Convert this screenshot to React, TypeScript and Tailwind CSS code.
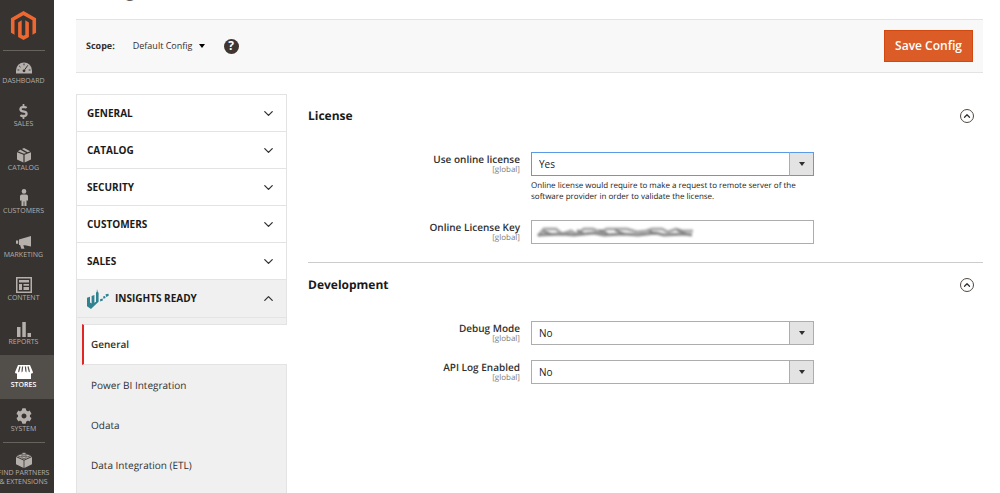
import React, { useState } from "react";
import { FaMagento, FaDollarSign, FaCog } from "react-icons/fa";
import { ChevronDown, ChevronUp } from "lucide-react";

const DashboardIcon = () => (
  <svg width="16" height="12" viewBox="0 0 16 12" fill="currentColor">
    <path d="M0 11.5V8.5a8 8 0 0 1 16 0v3z" />
    <g stroke="#373330" strokeWidth="1" fill="none">
      <path d="M1.5 8h1.8M3.2 4l1.3 1.1M8 1.6v1.7M14.5 8h-1.8M11.8 3.3l-3.2 4.5" />
      <circle cx="8" cy="8.8" r="1.4" fill="#373330" stroke="none" />
    </g>
  </svg>
);

const CatalogIcon = () => (
  <svg width="14" height="15" viewBox="0 0 14 15" fill="currentColor">
    <path d="M0 4.2l6.4 2.6v7.8L0 11.6zM14 4.2L7.6 6.8v7.8l6.4-3z" />
    <path d="M3.4 1.7L.8 3.2 7 5.8l2.2-.9zM5 .9L7 0l6.2 3.2-2.6 1.1z" />
  </svg>
);

const CustomersIcon = () => (
  <svg width="10" height="18" viewBox="0 0 10 18" fill="currentColor">
    <circle cx="5" cy="2.4" r="2.3" />
    <path d="M3 5.4h4c1.4 0 2 .8 2 2V11c0 .9-1.3.9-1.5.2V17H5.4v-4.6h-.8V17H2.5v-5.8C2.3 11.9 1 11.9 1 11V7.4c0-1.2.6-2 2-2z" />
  </svg>
);

const MarketingIcon = () => (
  <svg width="16" height="13" viewBox="0 0 16 13" fill="currentColor">
    <path d="M3 3.6L15 0v10.6L9 9.3H7.3l1.2 3.5H5.3L4.1 9H3zM0 4.6h2.2v3.2H0z" />
  </svg>
);

const ContentIcon = () => (
  <svg width="16" height="16" viewBox="0 0 16 16" fill="currentColor">
    <path fillRule="evenodd" d="M0 0h16v16H0zM1.5 1.5v13h13v-13z" />
    <path d="M3 3h10v2.5H3zM3 7h3v6H3zM7.5 7H13v1.8H7.5zM7.5 10H13v3H7.5z" />
  </svg>
);

const ReportsIcon = () => (
  <svg width="14" height="15" viewBox="0 0 14 15" fill="currentColor">
    <path d="M0 5h3.5v10H0zM5.3 0h3.5v15H5.3zM10.5 11H14v4h-3.5z" />
  </svg>
);

const StoresIcon = () => (
  <svg width="18" height="15" viewBox="0 0 18 15" fill="currentColor">
    <path d="M3 0h12l3 7.2c0 1.8-3 1.8-3.2.3-.4 1.6-3.2 1.6-3.6 0-.4 1.6-4 1.6-4.4 0-.4 1.6-3.2 1.6-3.6 0C3 9 0 9 0 7.2z" />
    <path d="M2 8h14v6H2z" />
    <path d="M5 1.5L3.6 6.8M7.6 1.5L7 6.8M10.4 1.5l.6 5.3M13 1.5l1.4 5.3" stroke="#524e4a" strokeWidth="1.2" />
  </svg>
);

const PartnersIcon = () => (
  <svg width="16" height="16" viewBox="0 0 16 16" fill="currentColor">
    <path d="M0 5l7.6 3.6V16L0 12.2zM16 5L8.4 8.6V16l7.6-3.8z" />
    <path d="M8 .8l7.6 3.4L8 7.8.4 4.2z" />
    <g stroke="#373330" strokeWidth=".6">
      <ellipse cx="8" cy="1.7" rx="2" ry="1.2" />
      <ellipse cx="4.2" cy="3.6" rx="2" ry="1.2" />
      <ellipse cx="11.8" cy="3.6" rx="2" ry="1.2" />
      <ellipse cx="8" cy="5.5" rx="2" ry="1.2" />
    </g>
  </svg>
);

const InsightsLogo = () => (
  <svg width="22" height="20" viewBox="0 0 22 20" aria-hidden="true" className="shrink-0" fill="#2f8391">
    <path d="M0 8.8l3-1v5.7l1.6.9V7l2.8-.9v7.6l1.6-.9V3.6l.7-.6L10 0l.8 3 .8.8v9L5.5 18.6 4 20l-4-2.8z" />
    <path d="M13 10.2l2.6-.7.3 2.1-2.6.9zM16 7.6l2-.7.6 2-2.1.9zM18.5 5.3l3-.6.2 2-2.5 1.2z" />
  </svg>
);

const menuItems = [
  { label: "Dashboard", icon: <DashboardIcon /> },
  { label: "Sales", icon: <FaDollarSign size={15} /> },
  { label: "Catalog", icon: <CatalogIcon /> },
  { label: "Customers", icon: <CustomersIcon /> },
  { label: "Marketing", icon: <MarketingIcon /> },
  { label: "Content", icon: <ContentIcon /> },
  { label: "Reports", icon: <ReportsIcon /> },
  { label: "Stores", icon: <StoresIcon />, active: true },
  { label: "System", icon: <FaCog size={16} /> },
];

const sections = ["General", "Catalog", "Security", "Customers", "Sales"];
const subPages = ["General", "Power BI Integration", "Odata", "Data Integration (ETL)"];

function Sidebar() {
  return (
    <aside className="flex w-[54px] shrink-0 flex-col overflow-hidden bg-[#373330] text-[#b5b0ac]">
      <a href="#" aria-label="Magento" className="flex h-[50px] items-center justify-center pr-[7px] text-[#ee6730]">
        <FaMagento size={29} />
      </a>
      <hr className="mr-[9px] ml-[3px] border-[#68625d]" />
      <ul>
        {menuItems.map((item) => (
          <li
            key={item.label}
            className={`h-[43px] even:h-[44px] ${item.active ? "bg-[#524e4a] font-semibold text-white" : ""}`}
          >
            <a href="#" className="flex flex-col items-center pt-2 pr-[7px] text-[7px] leading-[10px] uppercase">
              <span className="flex h-[18px] items-center">{item.icon}</span>
              <span>{item.label}</span>
            </a>
          </li>
        ))}
      </ul>
      <hr className="mr-[9px] ml-[3px] border-[#68625d]" />
      <a href="#" className="flex flex-col items-center pt-2 pr-[7px] text-[7px] leading-[9px] whitespace-nowrap uppercase">
        <span className="flex h-[18px] items-center">
          <PartnersIcon />
        </span>
        <span>Find Partners</span>
        <span>&amp; Extensions</span>
      </a>
    </aside>
  );
}

function ConfigNav() {
  return (
    <nav className="w-[211px] shrink-0 border-x border-t border-[#e3e3e3] text-[10px] text-[#303030]">
      {sections.map((name) => (
        <button
          key={name}
          className="flex h-[37px] w-full items-center justify-between border-b border-[#e3e3e3] px-[10px] font-bold text-[#1a1a1a] uppercase"
        >
          {name}
          <ChevronDown size={15} strokeWidth={2} className="text-[#303030]" />
        </button>
      ))}
      <button className="flex h-[38px] w-full items-center border-b border-[#e3e3e3] bg-[#f0f0f0] px-[10px] font-bold text-[#1a1a1a] uppercase">
        <InsightsLogo />
        <span className="ml-[6px] flex-1 text-left">Insights Ready</span>
        <ChevronUp size={15} strokeWidth={2} className="text-[#303030]" />
      </button>
      <ul className="min-h-[176px] bg-[#f0f0f0] pt-[6px]">
        {subPages.map((page, i) => (
          <li key={page}>
            {i === 0 ? (
              <a
                href="#"
                aria-current="page"
                className="-mr-px ml-[5px] flex h-[41px] items-center border-y border-l-2 border-y-[#e3e3e3] border-l-[#e22626] bg-white pl-[7px] font-semibold"
              >
                {page}
              </a>
            ) : (
              <a href="#" className="flex h-[40px] items-center pl-[14px]">
                {page}
              </a>
            )}
          </li>
        ))}
      </ul>
    </nav>
  );
}

function Field({ id, label, children }: { id: string; label: string; children: React.ReactNode }) {
  return (
    <div className="grid grid-cols-[212fr_283fr_158fr] gap-x-[11px]">
      <label htmlFor={id} className="flex flex-col pt-px text-right text-[10px] leading-[12px] font-semibold text-[#303030]">
        {label}
        <span className="text-[8px] leading-[9px] font-normal text-[#808080]">[global]</span>
      </label>
      <div className="min-w-0">{children}</div>
    </div>
  );
}

function YesNoSelect({ id, initial, active = false }: { id: string; initial: string; active?: boolean }) {
  const [value, setValue] = useState(initial);
  const border = active ? "border-[#5a9be6]" : "border-[#adadad]";

  return (
    <div className="relative">
      <select
        id={id}
        value={value}
        onChange={(e) => setValue(e.target.value)}
        className={`block h-[24px] w-full appearance-none border bg-white pr-[30px] pl-[7px] text-[10px] text-[#1a1a1a] outline-none ${border}`}
      >
        <option>Yes</option>
        <option>No</option>
      </select>
      <span className={`pointer-events-none absolute inset-y-0 right-0 flex w-[25px] items-center justify-center border bg-[#e3e3e3] ${border} border-l-[#adadad]`}>
        <svg width="6" height="4" viewBox="0 0 6 4">
          <path d="M0 0h6L3 4z" fill="#303030" />
        </svg>
      </span>
    </div>
  );
}

function SectionHeader({ title }: { title: string }) {
  return (
    <div className="flex items-center justify-between pr-[9px]">
      <h2 className="text-[12px] leading-[18px] font-bold text-[#1a1a1a]">{title}</h2>
      <button aria-label={`Collapse ${title}`} className="flex size-[14px] items-center justify-center rounded-full border border-[#514943] text-[#303030]">
        <ChevronUp size={10} strokeWidth={3} />
      </button>
    </div>
  );
}

// Obscured value shown over the licence key field
function MaskedKey() {
  return (
    <svg
      width="156"
      height="12"
      viewBox="0 0 156 12"
      aria-hidden="true"
      className="pointer-events-none absolute top-[6px] left-[6px] blur-[1px]"
      fill="none"
    >
      <path
        d="M1 10l6-7h12l6 5 9-3 5 3 8-5h9l7 3 7-3h20l10 3 9-1 6-2h10l6 3 8-3 6 2h11"
        stroke="#aaa"
        strokeWidth="3"
      />
      <path d="M1 9l24-1 12 1 20-2 10 2 20-1 14 1 18-2 8 2 20-1 8 1" stroke="#8c8c8c" strokeWidth="3" />
      <path d="M6 5l8 3M40 4l7 4M62 4l9 4M78 4l9 4M112 5l7 3M140 4l9 4" stroke="#808080" strokeWidth="2" />
    </svg>
  );
}

export default function App() {
  const [licenseKey, setLicenseKey] = useState("");

  return (
    <div className="flex min-h-screen bg-white font-['Open_Sans',sans-serif] text-[#303030] [text-rendering:geometricPrecision]">
      <Sidebar />
      <main className="min-w-0 flex-1 pr-[17px] pl-[22px]">
        <header className="h-[19px] overflow-hidden">
          <h1 className="-mt-[23px] text-[20px] leading-[24px] text-[#41362f]">Configuration</h1>
        </header>

        {/* Scope bar */}
        <div className="flex h-[54px] items-center border-y border-[#e3e3e3] bg-[#f8f8f8] px-[10px] text-[9px]">
          <span className="font-bold">Scope:</span>
          <button className="ml-[18px] flex items-center gap-[6px]">
            Default Config
            <svg width="6" height="4" viewBox="0 0 6 4">
              <path d="M0 0h6L3 4z" fill="#000" />
            </svg>
          </button>
          <button
            aria-label="Help"
            className="ml-[19px] flex size-[15px] items-center justify-center rounded-full bg-[#41362f] text-[12px] leading-none font-bold text-white"
          >
            ?
          </button>
          <button className="ml-auto h-[32px] border border-[#d2490f] bg-[#dc5c28] px-[10px] text-[12px] font-semibold text-white">
            Save Config
          </button>
        </div>

        <div className="flex gap-[21px] pt-[21px]">
          <ConfigNav />
          <div className="min-w-0 flex-1">
            <section className="border-b border-[#cccccc] pt-[13px] pb-[18px]">
              <SectionHeader title="License" />
              <div className="mt-[27px] flex flex-col gap-[18px]">
                <Field id="online" label="Use online license">
                  <YesNoSelect id="online" initial="Yes" active />
                  <p className="mt-[4px] text-[8px] leading-[11px] text-[#1a1a1a]">
                    Online license would require to make a request to remote server of the software provider in order to
                    validate the license.
                  </p>
                </Field>
                <Field id="key" label="Online License Key">
                  <div className="relative">
                    <input
                      id="key"
                      type="text"
                      value={licenseKey}
                      onChange={(e) => setLicenseKey(e.target.value)}
                      className="block h-[24px] w-full border border-[#adadad] px-[7px] text-[10px] outline-none"
                    />
                    {!licenseKey && <MaskedKey />}
                  </div>
                </Field>
              </div>
            </section>

            <section className="pt-[13px]">
              <SectionHeader title="Development" />
              <div className="mt-[27px] flex flex-col gap-[15px]">
                <Field id="debug" label="Debug Mode">
                  <YesNoSelect id="debug" initial="No" />
                </Field>
                <Field id="api-log" label="API Log Enabled">
                  <YesNoSelect id="api-log" initial="No" />
                </Field>
              </div>
            </section>
          </div>
        </div>
      </main>
    </div>
  );
}
